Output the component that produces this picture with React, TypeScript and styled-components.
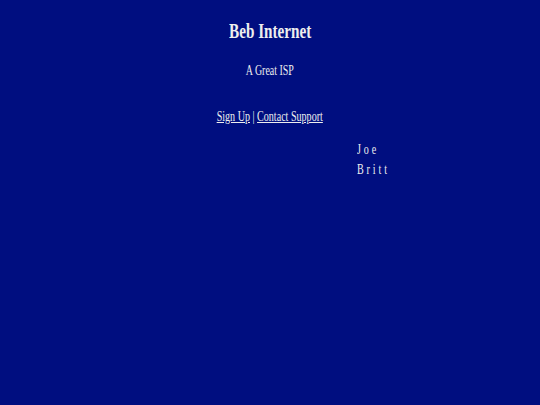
import React from "react";
import styled, { createGlobalStyle } from "styled-components";

const Global = createGlobalStyle`
  html, body { margin: 0; padding: 0; background: #000e80; }
  body { font-family: "Liberation Serif", "Times New Roman", serif; color: #eeeeee; }
`;

const Page = styled.div`
  width: 540px;
  height: 405px;
  background: #000e80;
  display: flex;
  flex-direction: column;
  align-items: center;
  padding-top: 18px;
  box-sizing: border-box;
`;

const Narrow = styled.div<{ $scale?: number; $origin?: string }>`
  display: inline-block;
  transform: scaleX(${(p) => p.$scale ?? 0.76});
  transform-origin: ${(p) => p.$origin || "center"};
  white-space: nowrap;
`;

const Title = styled.h1`
  margin: 0;
  font-size: 20px;
  font-weight: bold;
  line-height: 26px;
`;

const Tagline = styled.p`
  margin: 18px 0 0;
  font-size: 14px;
  line-height: 18px;
`;

const Nav = styled.nav`
  margin-top: 28px;
  font-size: 14px;
  line-height: 18px;
`;

const NavLink = styled.a`
  color: #eeeeee;
  text-decoration: underline;
`;

const Name = styled.div`
  align-self: flex-start;
  margin: 14px 0 0 357px;
  font-size: 14px;
  line-height: 20px;
  letter-spacing: 4px;
`;

export default function App() {
  return (
    <>
      <Global />
      <Page>
        <Title>
          <Narrow>Beb Internet</Narrow>
        </Title>
        <Tagline>
          <Narrow $scale={0.71}>A Great ISP</Narrow>
        </Tagline>
        <Nav>
          <Narrow $scale={0.72}>
            <NavLink href="#">Sign Up</NavLink> | <NavLink href="#">Contact Support</NavLink>
          </Narrow>
        </Nav>
        <Name>
          <Narrow $scale={0.72} $origin="left">
            Joe
            <br />
            Britt
          </Narrow>
        </Name>
      </Page>
    </>
  );
}
